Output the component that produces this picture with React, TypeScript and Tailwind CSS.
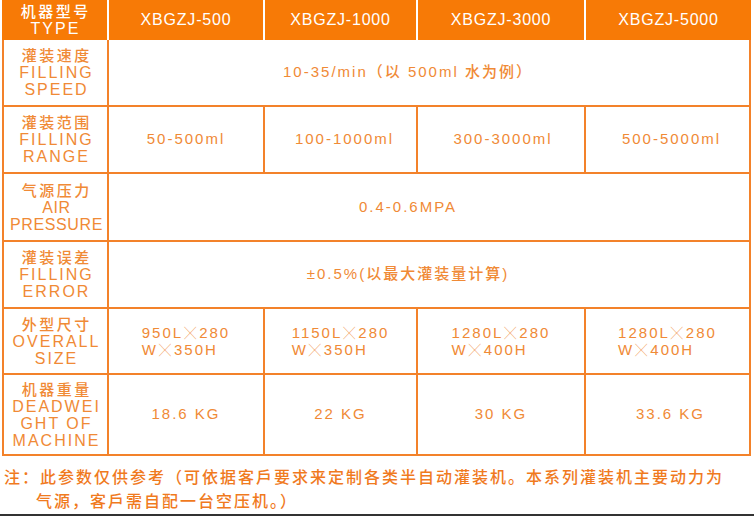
import React from "react";

const FONT = "font-['Liberation_Sans','Noto_Sans_CJK_SC',sans-serif]";

function Label({ zh, en, enClass = "" }: { zh: string; en: string[]; enClass?: string }) {
  return (
    <div className="flex flex-col items-center justify-center bg-white text-[#f08a36] leading-[17px]">
      <div className="text-[15px] tracking-[2.5px] pl-[2.5px] font-medium">{zh}</div>
      {en.map((l) => (
        <div key={l} className={`text-[16px] tracking-[2px] pl-[2px] ${enClass}`}>
          {l}
        </div>
      ))}
    </div>
  );
}

function Val({ children, span = false, extra = "" }: { children: React.ReactNode; span?: boolean; extra?: string }) {
  return (
    <div
      className={`flex items-center justify-center bg-white text-[#f08a36] text-[15px] tracking-[2px] ${span ? "col-span-4 pr-[42px]" : ""} ${extra}`}
    >
      {children}
    </div>
  );
}

function X() {
  return (
    <span className="font-['Noto_Sans_CJK_SC',sans-serif] text-[12px] leading-[17px] tracking-[0px] mx-[1px] mr-[3px] font-light">
      ╳
    </span>
  );
}

function Size({ a1, a2, b }: { a1: string; a2: string; b: string }) {
  return (
    <div className="flex items-center justify-center bg-white text-[#f08a36] text-[15px] tracking-[2px] leading-[17px]">
      <div className="flex flex-col items-start">
        <div className="h-[17px] flex items-center">
          {a1}
          <X />
          {a2}
        </div>
        <div className="h-[17px] flex items-center">
          W<X />
          {b}
        </div>
      </div>
    </div>
  );
}

export default function App() {
  return (
    <div className={`w-[754px] h-[516px] bg-white ${FONT} overflow-hidden`}>
      <div className="ml-[2px] w-[749px]">
        {/* header */}
        <div className="grid grid-cols-[105px_154px_151px_166px_165px] gap-x-[2px] bg-white h-[40px]">
          <div className="flex flex-col items-center justify-center bg-[#f77a06] text-white leading-[17px]">
            <div className="text-[15px] tracking-[2.5px] pl-[2.5px] font-medium">机器型号</div>
            <div className="text-[16px] tracking-[2px] pl-[2px]">TYPE</div>
          </div>
          {["XBGZJ-500", "XBGZJ-1000", "XBGZJ-3000", "XBGZJ-5000"].map((t) => (
            <div key={t} className="flex items-center justify-center bg-[#f77a06] text-white text-[16px] tracking-[0.8px]">
              {t}
            </div>
          ))}
        </div>
        {/* body */}
        <div className="grid grid-cols-[103px_154px_151px_166px_163px] grid-rows-[65px_65px_66px_65px_64px_79px] gap-[2px] bg-[#f3822a] px-[2px] pb-[2px]">
          <Label zh="灌装速度" en={["FILLING", "SPEED"]} />
          <Val span>
            10-35/min<span className="font-medium">（以</span>&nbsp;500ml&nbsp;<span className="font-medium">水为例）</span>
          </Val>

          <Label zh="灌装范围" en={["FILLING", "RANGE"]} />
          <Val>50-500ml</Val>
          <Val extra="pl-[8px]">100-1000ml</Val>
          <Val extra="pl-[4px]">300-3000ml</Val>
          <Val extra="pl-[8px]">500-5000ml</Val>

          <Label zh="气源压力" en={["AIR", "PRESSURE"]} enClass="!tracking-[0.6px]" />
          <Val span>0.4-0.6MPA</Val>

          <Label zh="灌装误差" en={["FILLING", "ERROR"]} />
          <Val span>
            ±0.5%(<span className="font-medium">以最大灌装量计算</span>)
          </Val>

          <Label zh="外型尺寸" en={["OVERALL", "SIZE"]} />
          <Size a1="950L" a2="280" b="350H" />
          <Size a1="1150L" a2="280" b="350H" />
          <Size a1="1280L" a2="280" b="400H" />
          <Size a1="1280L" a2="280" b="400H" />

          <Label zh="机器重量" en={["DEADWEI", "GHT OF", "MACHINE"]} />
          <Val>18.6 KG</Val>
          <Val>22 KG</Val>
          <Val>30 KG</Val>
          <Val extra="pl-[6px]">33.6 KG</Val>
        </div>
      </div>
      {/* note */}
      <div className="mt-[10px] text-[#f07a1e] text-[16px] tracking-[2px] leading-[24px] h-[48px] font-medium">
        <div className="pl-[4px] whitespace-nowrap">注：此参数仅供参考（可依据客戶要求来定制各类半自动灌装机。本系列灌装机主要动力为</div>
        <div className="pl-[36px] whitespace-nowrap">气源，客戶需自配一台空压机。）</div>
      </div>
      <div className="h-[2px] bg-[#333333]" />
    </div>
  );
}
